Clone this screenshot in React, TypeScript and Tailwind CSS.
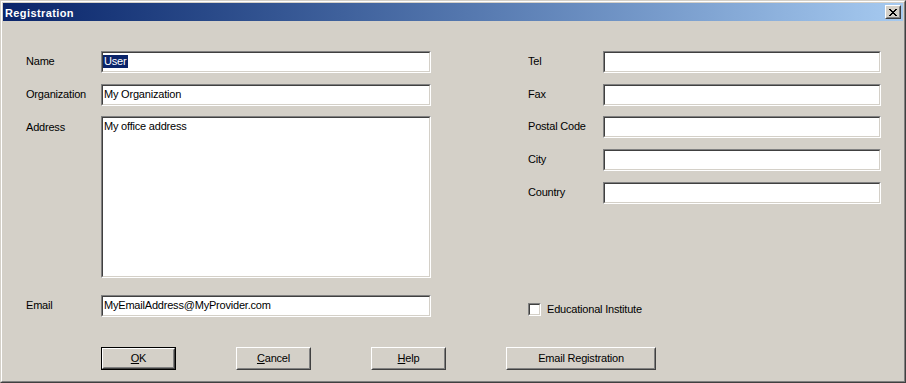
import React from "react";

function Edit({ w, h = 22, children, top = false }: { w: number; h?: number; children?: React.ReactNode; top?: boolean }) {
  return (
    <div
      className="border border-t-[#808080] border-l-[#808080] border-r-white border-b-white shrink-0"
      style={{ width: w, height: h }}
    >
      <div
        className={`h-full border border-t-[#404040] border-l-[#404040] border-r-[#d4d0c8] border-b-[#d4d0c8] bg-white pl-px leading-[13px] text-black ${
          top ? "pt-[2px]" : "pt-[2px]"
        }`}
      >
        {children}
      </div>
    </div>
  );
}

function Row({ label, w, mt, children }: { label: string; w: number; mt?: string; children?: React.ReactNode }) {
  return (
    <div className={`flex ${mt ?? ""}`}>
      <div className="w-[75px] shrink-0 pt-[4px] leading-[13px]">{label}</div>
      <Edit w={w}>{children}</Edit>
    </div>
  );
}

function Button({ w = 75, def = false, children }: { w?: number; def?: boolean; children: React.ReactNode }) {
  const inner = (
    <div className="h-full border border-t-white border-l-white border-r-[#404040] border-b-[#404040]">
      <div className="h-full border border-t-[#d4d0c8] border-l-[#d4d0c8] border-r-[#808080] border-b-[#808080] flex items-center justify-center leading-[13px]">
        {children}
      </div>
    </div>
  );
  return (
    <div className={`h-[23px] shrink-0 ${def ? "border border-black" : ""}`} style={{ width: w }}>
      {inner}
    </div>
  );
}

function CloseGlyph() {
  const rows = ["11000011", "01100110", "00111100", "00011000", "00111100", "01100110", "11000011"];
  return (
    <svg width="8" height="7" viewBox="0 0 8 7" shapeRendering="crispEdges">
      {rows.flatMap((r, y) =>
        r.split("").map((c, x) => (c === "1" ? <rect key={`${x}-${y}`} x={x} y={y} width="1" height="1" fill="#000" /> : null))
      )}
    </svg>
  );
}

export default function App() {
  return (
    <div className="w-[906px] h-[383px] bg-[#d4d0c8] text-[11px] tracking-[-0.2px] text-black [font-family:'Liberation_Sans',Arial,sans-serif] border border-t-[#d4d0c8] border-l-[#d4d0c8] border-r-[#404040] border-b-[#404040]">
      <div className="h-full border border-t-white border-l-white border-r-[#808080] border-b-[#808080] p-px flex flex-col">
        {/* title bar */}
        <div className="h-[18px] shrink-0 flex items-center justify-between pl-[2px] pr-[2px] bg-gradient-to-r from-[#0a246a] to-[#a6caf0]">
          <span className="text-white font-bold text-[11px] tracking-[0.4px] leading-[18px] pt-px">Registration</span>
          <div className="w-[16px] h-[14px] bg-[#d4d0c8] border border-t-white border-l-white border-r-[#404040] border-b-[#404040]">
            <div className="h-full border border-t-[#d4d0c8] border-l-[#d4d0c8] border-r-[#808080] border-b-[#808080] flex items-center justify-center">
              <CloseGlyph />
            </div>
          </div>
        </div>

        {/* content */}
        <div className="flex-1 pt-[30px] pl-[23px] flex flex-col">
          <div className="flex">
            <div className="flex flex-col w-[405px]">
              <Row label="Name" w={330}>
                <span className="bg-[#0a246a] text-white inline-block leading-[13px] pl-px pr-[2px] -ml-px">User</span>
              </Row>
              <Row label="Organization" w={330} mt="mt-[11px]">
                My Organization
              </Row>
              <div className="flex mt-[10px]">
                <div className="w-[75px] shrink-0 pt-[5px] leading-[13px]">Address</div>
                <Edit w={330} h={162} top>
                  My office address
                </Edit>
              </div>
              <Row label="Email" w={330} mt="mt-[17px]">
                MyEmailAddress@MyProvider.com
              </Row>
            </div>

            <div className="ml-[97px] flex flex-col">
              <Row label="Tel" w={278} />
              <Row label="Fax" w={278} mt="mt-[11px]" />
              <Row label="Postal Code" w={278} mt="mt-[10px]" />
              <Row label="City" w={278} mt="mt-[11px]" />
              <Row label="Country" w={278} mt="mt-[11px]" />
              <div className="mt-[99px] flex items-center gap-[6px]">
                <div className="w-[13px] h-[13px] border border-t-[#808080] border-l-[#808080] border-r-white border-b-white">
                  <div className="h-full border border-t-[#404040] border-l-[#404040] border-r-[#d4d0c8] border-b-[#d4d0c8] bg-white" />
                </div>
                <span className="leading-[13px]">Educational Institute</span>
              </div>
            </div>
          </div>

          <div className="mt-[30px] pl-[75px] flex gap-[60px]">
            <Button def>
              <span>
                <span className="underline underline-offset-1">O</span>K
              </span>
            </Button>
            <Button>
              <span>
                <span className="underline underline-offset-1">C</span>ancel
              </span>
            </Button>
            <Button>
              <span>
                <span className="underline underline-offset-1">H</span>elp
              </span>
            </Button>
            <Button w={150}>Email Registration</Button>
          </div>
        </div>
      </div>
    </div>
  );
}
